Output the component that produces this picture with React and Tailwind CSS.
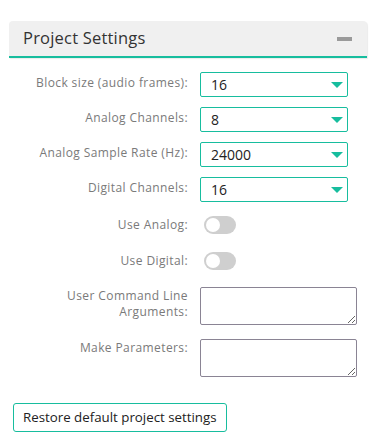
export default function App() {
  const selects = [
    { label: "Block size (audio frames):", value: "16", opts: ["2", "4", "8", "16", "32", "64", "128"] },
    { label: "Analog Channels:", value: "8", opts: ["2", "4", "8"] },
    { label: "Analog Sample Rate (Hz):", value: "24000", opts: ["22050", "24000", "44100"] },
    { label: "Digital Channels:", value: "16", opts: ["16"] },
  ];

  return (
    <div
      className="min-h-screen bg-white px-[9px] pt-[21px] text-[#333]"
      style={{ fontFamily: '"Open Sans", "Liberation Sans", sans-serif' }}
    >
      <div className="flex h-[37px] items-center justify-between rounded-t-[4px] border-b-2 border-[#17bd9e] bg-[#f0f0f0] pl-[14px] pr-[15px] shadow-[1px_1px_1px_rgba(0,0,0,0.08)]">
        <h2 className="text-[16.5px] leading-none tracking-[0.2px] text-[#333]">Project Settings</h2>
        <span className="block h-[4px] w-[15px] bg-[#9a9a9a]" />
      </div>

      <div className="mt-[14px] flex flex-col">
        {selects.map((s, i) => (
          <div key={s.label} className={`flex items-start ${i > 0 ? "mt-[10px]" : ""}`}>
            <label className="w-[179px] pt-[2px] text-right text-[12px] leading-[18px] tracking-[0.4px] text-[#7a7a7a]">
              {s.label}
            </label>
            <div className="relative ml-3 h-[25px] w-[148px]">
              <select
                defaultValue={s.value}
                className="h-full w-full appearance-none rounded-[2px] border border-[#17bd9e] bg-white pl-[10px] text-[14px] text-[#222] outline-none"
              >
                {s.opts.map((o) => (
                  <option key={o}>{o}</option>
                ))}
              </select>
              <svg className="pointer-events-none absolute right-[5px] top-[10px]" width="12" height="6" viewBox="0 0 12 6">
                <path d="M0 0 H12 L6 6 Z" fill="#17bd9e" />
              </svg>
            </div>
          </div>
        ))}

        {["Use Analog:", "Use Digital:"].map((l, i) => (
          <div key={l} className={`flex items-start ${i === 0 ? "mt-[14px]" : "mt-[18px]"}`}>
            <label className="w-[179px] text-right text-[12px] leading-[18px] tracking-[0.4px] text-[#7a7a7a]">{l}</label>
            <button className="ml-[16px] flex h-[18px] w-[32px] items-center rounded-full bg-[#cfcfcf] px-[2px]">
              <span className="block h-[14px] w-[14px] rounded-full bg-white" />
            </button>
          </div>
        ))}

        <div className="mt-[17px] flex items-start">
          <label className="w-[179px] pt-[1px] text-right text-[12px] leading-[15.5px] tracking-[0.4px] text-[#7a7a7a]">
            User Command Line
            <br />
            Arguments:
          </label>
          <textarea className="ml-3 h-[38px] w-[157px] rounded-[2px] border border-[#8a8494] bg-white outline-none" />
        </div>

        <div className="mt-[14px] flex items-start">
          <label className="w-[179px] pt-[1px] text-right text-[12px] leading-[15px] tracking-[0.4px] text-[#7a7a7a]">
            Make Parameters:
          </label>
          <textarea className="ml-3 h-[38px] w-[157px] rounded-[2px] border border-[#8a8494] bg-white outline-none" />
        </div>
      </div>

      <button className="ml-[4px] mt-[26px] h-[29px] rounded-[3px] border border-[#17bd9e] bg-white px-[9px] text-[13.3px] text-[#222]">
        Restore default project settings
      </button>
    </div>
  );
}
